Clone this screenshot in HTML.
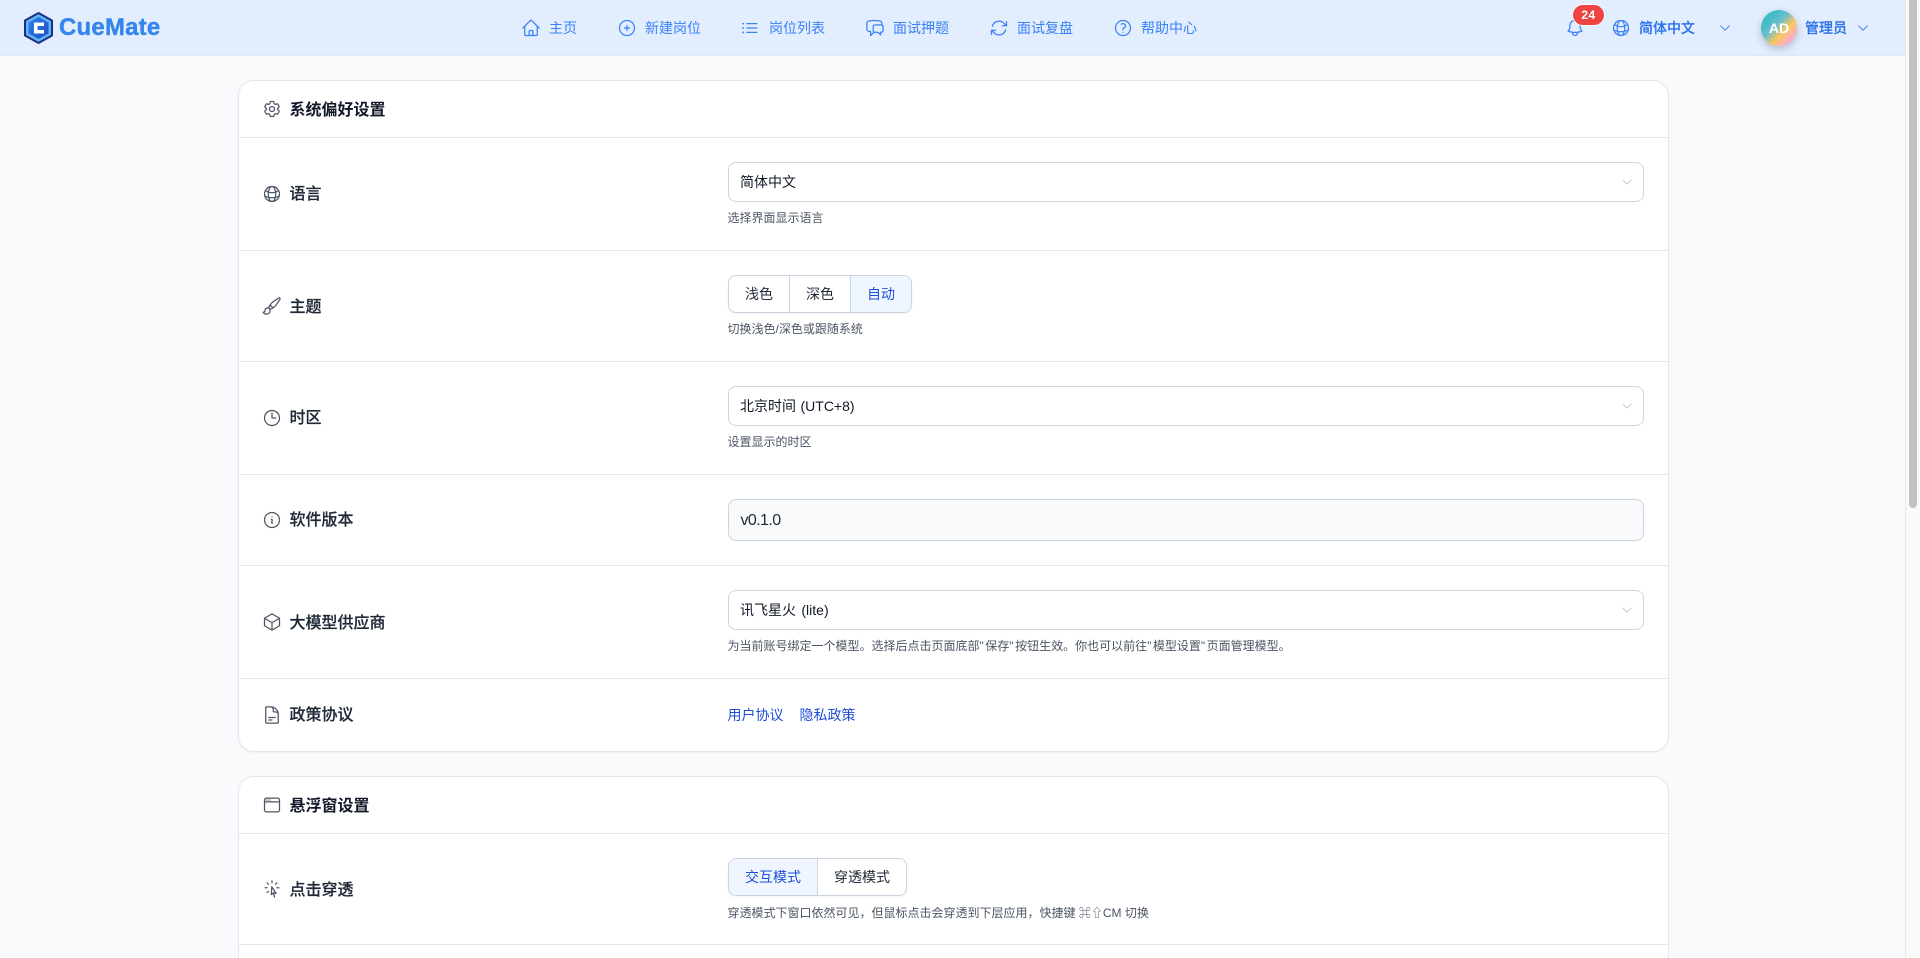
<!DOCTYPE html>
<html lang="zh-CN">
<head>
<meta charset="utf-8">
<title>CueMate</title>
<style>
*{box-sizing:border-box;margin:0;padding:0}
html,body{width:1920px;height:958px;overflow:hidden;background:#f8fafc}
body{position:relative;font-family:"Liberation Sans","Noto Sans CJK SC",sans-serif;color:#111827}
.a{position:absolute;white-space:nowrap}
.t{position:absolute;white-space:nowrap;line-height:20px;height:20px}
svg.i{position:absolute;fill:none;stroke:currentColor;stroke-width:1.5;stroke-linecap:round;stroke-linejoin:round}
#hd{position:absolute;left:0;top:0;width:1905px;height:56px;background:#e2edfd;border-bottom:1px solid #dfe7f2}
.nav{font-size:14px;color:#3b82f6}
.navi{color:#3b82f6}
.rt{font-size:14px;font-weight:500;color:#2f74ea;-webkit-text-stroke:.2px #2f74ea}
.card{position:absolute;left:238px;width:1431px;background:#fff;border:1px solid #e2e8f0}
.line{position:absolute;left:239px;width:1429px;height:1px;background:#e2e8f0}
.h{font-size:16px;font-weight:700;color:#111827}
.l{font-size:16px;font-weight:500;color:#1f2937;-webkit-text-stroke:.2px #1f2937}
.ic{color:#4b5563}
.sel{position:absolute;left:728px;width:916px;height:40px;border:1px solid #d1d5db;border-radius:8px;background:#fff}
.v{font-size:14px;color:#111827}
.help{font-size:12px;color:#4b5563}
.q{letter-spacing:1.5px}
.seg{position:absolute;border:1px solid #cbd5e1;border-radius:8px;background:#fff;overflow:hidden;box-shadow:0 1px 2px rgba(0,0,0,.05)}
.seg div{position:absolute;top:0;height:100%;text-align:center;font-size:14px;line-height:36px;color:#1f2937}
.seg .on{background:#eff6ff;color:#1d4ed8}
.seg .b{border-right:1px solid #cbd5e1}
.lnk{font-size:14px;color:#1d4ed8}
</style>
</head>
<body>

<div id="hd"></div>

<!-- logo -->
<svg class="a" style="left:24px;top:12px" width="29" height="32" viewBox="0 0 29 32">
<defs><linearGradient id="lg" x1="0" y1="0" x2="1" y2="1"><stop offset="0" stop-color="#2f80ed"/><stop offset="1" stop-color="#1e4fc0"/></linearGradient></defs>
<polygon points="14.5,1 28,8.5 28,23.5 14.5,31 1,23.5 1,8.5" fill="#60b4f8" stroke="#1e2f80" stroke-width="2" stroke-linejoin="round"/>
<polygon points="14.5,5 24.5,10.5 24.5,21.5 14.5,27 4.5,21.5 4.5,10.5" fill="url(#lg)"/>
<path d="M10 10.5h10v3.5h-6.5v4H20v3.5H10z" fill="#fff"/>
</svg>
<div class="a" style="left:59px;top:14px;font-size:24px;line-height:28px;font-weight:700;color:#3585ee;letter-spacing:.2px;-webkit-text-stroke:.4px #3585ee">CueMate</div>

<!-- nav -->
<svg class="i navi" style="left:521px;top:18px" width="20" height="20" viewBox="0 0 24 24"><path d="M2.25 12l8.954-8.955c.44-.439 1.152-.439 1.591 0L21.75 12M4.5 9.75v10.125c0 .621.504 1.125 1.125 1.125H9.75v-4.875c0-.621.504-1.125 1.125-1.125h2.25c.621 0 1.125.504 1.125 1.125V21h4.125c.621 0 1.125-.504 1.125-1.125V9.75M8.25 21h8.25"/></svg>
<div class="t nav" style="left:549px;top:18px">主页</div>

<svg class="i navi" style="left:617px;top:18px" width="20" height="20" viewBox="0 0 24 24"><path d="M12 9v6m3-3H9m12 0a9 9 0 11-18 0 9 9 0 0118 0z"/></svg>
<div class="t nav" style="left:645px;top:18px">新建岗位</div>

<svg class="i navi" style="left:740px;top:18px" width="20" height="20" viewBox="0 0 24 24"><path d="M8.25 6.75h12M8.25 12h12m-12 5.25h12M3.75 6.75h.007v.008H3.75V6.75zm.375 0a.375.375 0 11-.75 0 .375.375 0 01.75 0zM3.75 12h.007v.008H3.75V12zm.375 0a.375.375 0 11-.75 0 .375.375 0 01.75 0zm-.375 5.25h.007v.008H3.75v-.008zm.375 0a.375.375 0 11-.75 0 .375.375 0 01.75 0z"/></svg>
<div class="t nav" style="left:769px;top:18px">岗位列表</div>

<svg class="i navi" style="left:865px;top:18px" width="20" height="20" viewBox="0 0 24 24"><path d="M20.25 8.511c.884.284 1.5 1.128 1.5 2.097v4.286c0 1.136-.847 2.1-1.98 2.193-.34.027-.68.052-1.02.072v3.091l-3-3c-1.354 0-2.694-.055-4.02-.163a2.115 2.115 0 01-.825-.242m9.345-8.334a2.126 2.126 0 00-.476-.095 48.64 48.64 0 00-8.048 0c-1.131.094-1.976 1.057-1.976 2.192v4.286c0 .837.46 1.58 1.155 1.951m9.345-8.334V6.637c0-1.621-1.152-3.026-2.76-3.235A48.455 48.455 0 0011.25 3c-2.115 0-4.198.137-6.24.402-1.608.209-2.76 1.614-2.76 3.235v6.226c0 1.621 1.152 3.026 2.76 3.235.577.075 1.157.14 1.74.194V21l4.155-4.155"/></svg>
<div class="t nav" style="left:893px;top:18px">面试押题</div>

<svg class="i navi" style="left:989px;top:18px" width="20" height="20" viewBox="0 0 24 24"><path d="M16.023 9.348h4.992v-.001M2.985 19.644v-4.992m0 0h4.992m-4.993 0l3.181 3.183a8.25 8.25 0 0013.803-3.7M4.031 9.865a8.25 8.25 0 0113.803-3.7l3.181 3.182m0-4.991v4.99"/></svg>
<div class="t nav" style="left:1017px;top:18px">面试复盘</div>

<svg class="i navi" style="left:1113px;top:18px" width="20" height="20" viewBox="0 0 24 24"><path d="M9.879 7.519c1.171-1.025 3.071-1.025 4.242 0 1.172 1.025 1.172 2.687 0 3.712-.203.179-.43.326-.67.442-.745.361-1.45.999-1.45 1.827v.75M21 12a9 9 0 11-18 0 9 9 0 0118 0zm-9 5.25h.008v.008H12v-.008z"/></svg>
<div class="t nav" style="left:1141px;top:18px">帮助中心</div>

<!-- right -->
<svg class="i navi" style="left:1565px;top:18px" width="20" height="20" viewBox="0 0 24 24"><path d="M14.857 17.082a23.848 23.848 0 005.454-1.31A8.967 8.967 0 0118 9.75v-.7V9A6 6 0 006 9v.75a8.967 8.967 0 01-2.312 6.022c1.733.64 3.56 1.085 5.455 1.31m5.714 0a24.255 24.255 0 01-5.714 0m5.714 0a3 3 0 11-5.714 0"/></svg>
<div class="a" style="left:1572px;top:4px;width:33px;height:22px;border:1px solid #fff;border-radius:11px;background:#ef4444;color:#fff;font-size:12px;font-weight:700;line-height:20px;text-align:center;letter-spacing:.4px">24</div>

<svg class="i navi" style="left:1611px;top:18px" width="20" height="20" viewBox="0 0 24 24"><path d="M12 21a9.004 9.004 0 008.716-6.747M12 21a9.004 9.004 0 01-8.716-6.747M12 21c2.485 0 4.5-4.03 4.5-9S14.485 3 12 3m0 18c-2.485 0-4.5-4.03-4.5-9S9.515 3 12 3m0 0a8.997 8.997 0 017.843 4.582M12 3a8.997 8.997 0 00-7.843 4.582m15.686 0A11.953 11.953 0 0112 10.5c-2.998 0-5.74-1.1-7.843-2.918m15.686 0A8.959 8.959 0 0121 12c0 .778-.099 1.533-.284 2.253m0 0A17.919 17.919 0 0112 16.5c-3.162 0-6.133-.815-8.716-2.247m0 0A9.015 9.015 0 013 12c0-1.605.42-3.113 1.157-4.418"/></svg>
<div class="t rt" style="left:1639px;top:18px">简体中文</div>
<svg class="i navi" style="left:1718px;top:21px;color:#2f74ea" width="14" height="14" viewBox="0 0 24 24" stroke-width="2"><path d="M19.5 8.25l-7.5 7.5-7.5-7.5"/></svg>

<div class="a" style="left:1761px;top:10px;width:36px;height:36px;border-radius:50%;background:linear-gradient(135deg,#2cb8c4 0%,#45bcc4 25%,#6abed0 42%,#f8c95c 62%,#fcb8a0 74%,#ff9ee8 88%);box-shadow:0 3px 8px rgba(30,41,59,.25);color:#fff;font-size:14px;font-weight:700;line-height:36px;text-align:center">AD</div>
<div class="t rt" style="left:1805px;top:18px">管理员</div>
<svg class="i navi" style="left:1856px;top:21px;color:#2f74ea" width="14" height="14" viewBox="0 0 24 24" stroke-width="2"><path d="M19.5 8.25l-7.5 7.5-7.5-7.5"/></svg>

<!-- scrollbar -->
<div class="a" style="left:1905px;top:0;width:15px;height:958px;background:#fafafa;border-left:1px solid #e8e8e8"></div>
<div class="a" style="left:1909px;top:0;width:8px;height:508px;background:#c2c2c2;border-radius:0 0 4px 4px"></div>

<!-- card 1 -->
<div class="card" style="top:80px;height:672px;border-radius:16px;box-shadow:0 1px 2px rgba(0,0,0,.05)"></div>
<div class="line" style="top:137px"></div>
<div class="line" style="top:250px"></div>
<div class="line" style="top:361px"></div>
<div class="line" style="top:474px"></div>
<div class="line" style="top:565px"></div>
<div class="line" style="top:678px"></div>

<svg class="i ic" style="left:262px;top:99px" width="20" height="20" viewBox="0 0 24 24"><path d="M9.594 3.94c.09-.542.56-.94 1.11-.94h2.593c.55 0 1.02.398 1.11.94l.213 1.281c.063.374.313.686.645.87.074.04.147.083.22.127.324.196.72.257 1.075.124l1.217-.456a1.125 1.125 0 011.37.49l1.296 2.247a1.125 1.125 0 01-.26 1.431l-1.003.827c-.293.24-.438.613-.431.992a6.759 6.759 0 010 .255c-.007.378.138.75.43.99l1.005.828c.424.35.534.954.26 1.43l-1.298 2.247a1.125 1.125 0 01-1.369.491l-1.217-.456c-.355-.133-.75-.072-1.076.124a6.57 6.57 0 01-.22.128c-.331.183-.581.495-.644.869l-.213 1.28c-.09.543-.56.941-1.11.941h-2.594c-.55 0-1.02-.398-1.11-.94l-.213-1.281c-.062-.374-.312-.686-.644-.87a6.52 6.52 0 01-.22-.127c-.325-.196-.72-.257-1.076-.124l-1.217.456a1.125 1.125 0 01-1.369-.49l-1.297-2.247a1.125 1.125 0 01.26-1.431l1.004-.827c.292-.24.437-.613.43-.992a6.932 6.932 0 010-.255c.007-.378-.138-.75-.43-.99l-1.004-.828a1.125 1.125 0 01-.26-1.43l1.297-2.247a1.125 1.125 0 011.37-.491l1.216.456c.356.133.751.072 1.076-.124.072-.044.146-.087.22-.128.332-.183.582-.495.644-.869l.214-1.281z M15 12a3 3 0 11-6 0 3 3 0 016 0z"/></svg>
<div class="t h" style="left:289.5px;top:101px">系统偏好设置</div>

<!-- language -->
<svg class="i ic" style="left:262px;top:184px" width="20" height="20" viewBox="0 0 24 24"><path d="M12 21a9.004 9.004 0 008.716-6.747M12 21a9.004 9.004 0 01-8.716-6.747M12 21c2.485 0 4.5-4.03 4.5-9S14.485 3 12 3m0 18c-2.485 0-4.5-4.03-4.5-9S9.515 3 12 3m0 0a8.997 8.997 0 017.843 4.582M12 3a8.997 8.997 0 00-7.843 4.582m15.686 0A11.953 11.953 0 0112 10.5c-2.998 0-5.74-1.1-7.843-2.918m15.686 0A8.959 8.959 0 0121 12c0 .778-.099 1.533-.284 2.253m0 0A17.919 17.919 0 0112 16.5c-3.162 0-6.133-.815-8.716-2.247m0 0A9.015 9.015 0 013 12c0-1.605.42-3.113 1.157-4.418"/></svg>
<div class="t l" style="left:289.5px;top:185px">语言</div>
<div class="sel" style="top:162px"></div>
<div class="t v" style="left:740px;top:172px">简体中文</div>
<svg class="a" style="left:1620px;top:175px" width="14" height="14" viewBox="0 0 24 24" fill="none" stroke="#bcc0c6" stroke-width="1.5"><path d="M19.5 8.25l-7.5 7.5-7.5-7.5"/></svg>
<div class="t help" style="left:727.5px;top:208px">选择界面显示语言</div>

<!-- theme -->
<svg class="i ic" style="left:262px;top:296px" width="20" height="20" viewBox="0 0 24 24"><path d="M9.53 16.122a3 3 0 00-5.78 1.128 2.25 2.25 0 01-2.4 2.245 4.5 4.5 0 008.4-2.245c0-.399-.078-.78-.22-1.128zm0 0a15.998 15.998 0 003.388-1.62m-5.043-.025a15.994 15.994 0 011.622-3.395m3.42 3.42a15.995 15.995 0 004.764-4.648l3.876-5.814a1.151 1.151 0 00-1.597-1.597L14.146 6.32a15.996 15.996 0 00-4.649 4.763m3.42 3.42a6.776 6.776 0 00-3.42-3.42"/></svg>
<div class="t l" style="left:289.5px;top:298px">主题</div>
<div class="seg" style="left:728px;top:275px;width:184px;height:38px">
  <div class="b" style="left:0;width:61px">浅色</div>
  <div class="b" style="left:61px;width:61px">深色</div>
  <div class="on" style="left:122px;width:60px">自动</div>
</div>
<div class="t help" style="left:727.5px;top:319px">切换浅色/深色或跟随系统</div>

<!-- timezone -->
<svg class="i ic" style="left:262px;top:408px" width="20" height="20" viewBox="0 0 24 24"><path d="M12 6v6h4.5m4.5 0a9 9 0 11-18 0 9 9 0 0118 0z"/></svg>
<div class="t l" style="left:289.5px;top:409px">时区</div>
<div class="sel" style="top:386px"></div>
<div class="t v" style="left:740px;top:396px;word-spacing:.6px">北京时间 (UTC+8)</div>
<svg class="a" style="left:1620px;top:399px" width="14" height="14" viewBox="0 0 24 24" fill="none" stroke="#bcc0c6" stroke-width="1.5"><path d="M19.5 8.25l-7.5 7.5-7.5-7.5"/></svg>
<div class="t help" style="left:727.5px;top:432px">设置显示的时区</div>

<!-- version -->
<svg class="i ic" style="left:262px;top:510px" width="20" height="20" viewBox="0 0 24 24"><path d="M11.25 11.25l.041-.02a.75.75 0 011.063.852l-.708 2.836a.75.75 0 001.063.853l.041-.021M21 12a9 9 0 11-18 0 9 9 0 0118 0zm-9-3.75h.008v.008H12V8.25z"/></svg>
<div class="t l" style="left:289.5px;top:511px">软件版本</div>
<div class="a" style="left:728px;top:499px;width:916px;height:42px;border:1px solid #cbd5e1;border-radius:8px;background:#f8fafc"></div>
<div class="t" style="left:740.5px;top:511px;font-size:16px;color:#1f2937;letter-spacing:-.6px">v0.1.0</div>

<!-- model -->
<svg class="i ic" style="left:262px;top:612px" width="20" height="20" viewBox="0 0 24 24"><path d="M21 7.5l-9-5.25L3 7.5m18 0l-9 5.25m9-5.25v9l-9 5.25M3 7.5l9 5.25M3 7.5v9l9 5.25m0-9v9"/></svg>
<div class="t l" style="left:289.5px;top:614px">大模型供应商</div>
<div class="sel" style="top:590px"></div>
<div class="t v" style="left:740px;top:600px;word-spacing:1.5px">讯飞星火 (lite)</div>
<svg class="a" style="left:1620px;top:603px" width="14" height="14" viewBox="0 0 24 24" fill="none" stroke="#bcc0c6" stroke-width="1.5"><path d="M19.5 8.25l-7.5 7.5-7.5-7.5"/></svg>
<div class="t help" style="left:727.5px;top:636px">为当前账号绑定一个模型。选择后点击页面底部<span class="q">"</span>保存<span class="q">"</span>按钮生效。你也可以前往<span class="q">"</span>模型设置<span class="q">"</span>页面管理模型。</div>

<!-- policy -->
<svg class="i ic" style="left:262px;top:705px" width="20" height="20" viewBox="0 0 24 24"><path d="M19.5 14.25v-2.625a3.375 3.375 0 00-3.375-3.375h-1.5A1.125 1.125 0 0113.5 7.125v-1.5a3.375 3.375 0 00-3.375-3.375H8.25m0 12.75h7.5m-7.5 3H12M10.5 2.25H5.625c-.621 0-1.125.504-1.125 1.125v17.25c0 .621.504 1.125 1.125 1.125h12.75c.621 0 1.125-.504 1.125-1.125V11.25a9 9 0 00-9-9z"/></svg>
<div class="t l" style="left:289.5px;top:706px">政策协议</div>
<div class="t lnk" style="left:727.5px;top:705px">用户协议</div>
<div class="t lnk" style="left:799.5px;top:705px">隐私政策</div>

<!-- card 2 -->
<div class="card" style="top:776px;height:200px;border-radius:16px 16px 0 0"></div>
<div class="line" style="top:833px"></div>
<div class="line" style="top:944px"></div>

<svg class="i ic" style="left:262px;top:795px" width="20" height="20" viewBox="0 0 24 24"><path d="M3 8.25V18a2.25 2.25 0 002.25 2.25h13.5A2.25 2.25 0 0021 18V8.25m-18 0V6a2.25 2.25 0 012.25-2.25h13.5A2.25 2.25 0 0121 6v2.25m-18 0h18M5.25 6h.008v.008H5.25V6zM7.5 6h.008v.008H7.5V6zm2.25 0h.008v.008H9.75V6z"/></svg>
<div class="t h" style="left:289.5px;top:797px">悬浮窗设置</div>

<svg class="i ic" style="left:262px;top:879px" width="20" height="20" viewBox="0 0 24 24"><path d="M15.042 21.672L13.684 16.6m0 0l-2.51 2.225.569-9.47 5.227 7.917-3.286-.672zM12 2.25V4.5m5.834.166l-1.591 1.591M20.25 10.5H18M7.757 14.743l-1.59 1.59M6 10.5H3.75m4.007-4.243l-1.59-1.59"/></svg>
<div class="t l" style="left:289.5px;top:881px">点击穿透</div>
<div class="seg" style="left:728px;top:858px;width:179px;height:38px">
  <div class="on b" style="left:0;width:89px">交互模式</div>
  <div style="left:89px;width:88px">穿透模式</div>
</div>
<div class="t help" style="left:727.5px;top:903px">穿透模式下窗口依然可见，但鼠标点击会穿透到下层应用，快捷键 ⌘⇧CM 切换</div>

</body>
</html>
